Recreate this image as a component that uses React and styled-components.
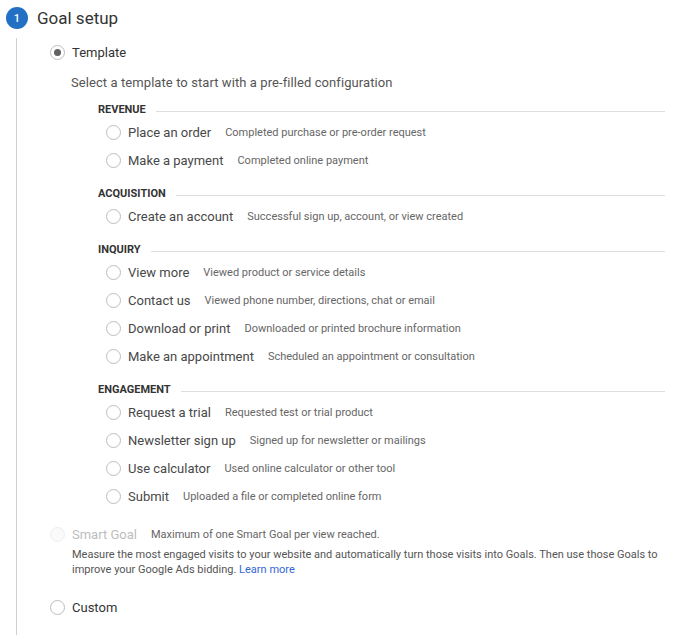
import React from 'react'
import styled, { createGlobalStyle } from 'styled-components'

const Global = createGlobalStyle`
  body {
    margin: 0;
    background: #fff;
    font-family: Roboto, "Noto Sans", Arial, sans-serif;
    color: #333;
  }
`

const Page = styled.div`
  width: 693px;
  height: 635px;
  overflow: hidden;
`

const StepHead = styled.div`
  display: flex;
  align-items: center;
  height: 36px;
  padding-left: 6px;
`

const StepNum = styled.div`
  width: 22px;
  height: 22px;
  border-radius: 50%;
  background: #2270c4;
  color: #fff;
  font-size: 11px;
  font-weight: 500;
  display: flex;
  align-items: center;
  justify-content: center;
  margin-right: 9px;
`

const StepTitle = styled.h2`
  margin: 0;
  font-size: 17px;
  font-weight: 400;
  color: #333;
`

const StepBody = styled.div`
  margin-left: 16px;
  border-left: 1px solid #cfcfcf;
  padding-left: 33px;
  padding-bottom: 40px;
`

const Option = styled.label`
  display: flex;
  align-items: center;
  height: 28px;
  margin-top: ${p => p.$top || 0}px;
  font-size: 13px;
  color: #333;
`

const Radio = styled.span`
  box-sizing: border-box;
  flex: none;
  width: 15px;
  height: 15px;
  border-radius: 50%;
  border: 1px solid ${p => (p.$disabled ? '#eeeeee' : '#bdbdbd')};
  background: ${p => (p.$disabled ? '#fafafa' : '#fff')};
  display: flex;
  align-items: center;
  justify-content: center;
  margin-right: 7px;
  &::after {
    content: '';
    display: ${p => (p.$checked ? 'block' : 'none')};
    width: 7px;
    height: 7px;
    border-radius: 50%;
    background: #616161;
  }
`

const Intro = styled.p`
  margin: 8px 0 0 21px;
  font-size: 13px;
  line-height: 18px;
  letter-spacing: 0.08px;
  color: #555;
`

const Groups = styled.div`
  margin-left: 48px;
  margin-right: 28px;
`

const Group = styled.section`
  margin-top: ${p => p.$top}px;
`

const GroupHead = styled.div`
  display: flex;
  align-items: center;
  height: 16px;
  font-size: 11px;
  font-weight: 700;
  color: #333;
  &::after {
    content: '';
    flex: 1;
    height: 1px;
    background: #dedede;
    margin-left: 10px;
    margin-top: 4px;
  }
`

const Items = styled.div`
  padding-left: 8px;
  margin-top: 1px;
`

const ItemLabel = styled.span`
  color: ${p => (p.$disabled ? '#bdbdbd' : '#484848')};
  margin-right: 14px;
  white-space: nowrap;
`

const Desc = styled.span`
  font-size: 11px;
  color: #666;
  white-space: nowrap;
`

const SmartText = styled.p`
  margin: -1px 28px 0 22px;
  font-size: 11px;
  line-height: 15px;
  color: #555;
  a {
    color: #3367d6;
    text-decoration: none;
  }
`

const groups = [
  {
    name: 'REVENUE',
    items: [
      ['Place an order', 'Completed purchase or pre-order request'],
      ['Make a payment', 'Completed online payment'],
    ],
  },
  {
    name: 'ACQUISITION',
    items: [['Create an account', 'Successful sign up, account, or view created']],
  },
  {
    name: 'INQUIRY',
    items: [
      ['View more', 'Viewed product or service details'],
      ['Contact us', 'Viewed phone number, directions, chat or email'],
      ['Download or print', 'Downloaded or printed brochure information'],
      ['Make an appointment', 'Scheduled an appointment or consultation'],
    ],
  },
  {
    name: 'ENGAGEMENT',
    items: [
      ['Request a trial', 'Requested test or trial product'],
      ['Newsletter sign up', 'Signed up for newsletter or mailings'],
      ['Use calculator', 'Used online calculator or other tool'],
      ['Submit', 'Uploaded a file or completed online form'],
    ],
  },
]

export default function App() {
  return (
    <Page>
      <Global />
      <StepHead>
        <StepNum>1</StepNum>
        <StepTitle>Goal setup</StepTitle>
      </StepHead>
      <StepBody>
        <Option $top={2}>
          <Radio $checked />
          <span>Template</span>
        </Option>
        <Intro>Select a template to start with a pre-filled configuration</Intro>
        <Groups>
          {groups.map((g, i) => (
            <Group key={g.name} $top={i === 0 ? 9 : 11}>
              <GroupHead>{g.name}</GroupHead>
              <Items>
                {g.items.map(([label, desc]) => (
                  <Option key={label}>
                    <Radio />
                    <ItemLabel>{label}</ItemLabel>
                    <Desc>{desc}</Desc>
                  </Option>
                ))}
              </Items>
            </Group>
          ))}
        </Groups>
        <Option $top={10}>
          <Radio $disabled />
          <ItemLabel $disabled>Smart Goal</ItemLabel>
          <Desc>Maximum of one Smart Goal per view reached.</Desc>
        </Option>
        <SmartText>
          Measure the most engaged visits to your website and automatically turn those visits into
          Goals. Then use those Goals to improve your Google Ads bidding. <a href="#">Learn more</a>
        </SmartText>
        <Option $top={16}>
          <Radio />
          <span>Custom</span>
        </Option>
      </StepBody>
    </Page>
  )
}
